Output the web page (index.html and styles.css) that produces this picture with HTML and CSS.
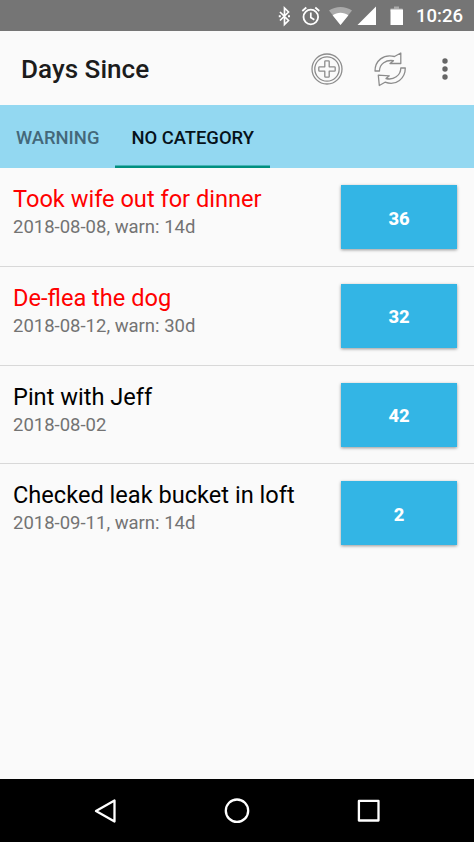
FILE: index.html
```html
<!DOCTYPE html>
<html lang="en">
<head>
    <meta charset="UTF-8">
    <meta name="viewport" content="width=device-width, initial-scale=1.0">
    <title>Days Since</title>
    <link rel="stylesheet" href="styles.css">
</head>
<body>
    <div class="screen">
        <div class="status-bar">
            <svg class="status-icons" width="130" height="31" viewBox="0 0 130 31">
                <!-- bluetooth -->
                <path d="M4 12l8.500 8.500-4 4V8l4 4L4 20.500" fill="none" stroke="#fff" stroke-width="1.700"/>
                <path d="M2.800 16.200h2M12 16.200h2" stroke="#fff" stroke-width="2"/>
                <!-- alarm -->
                <circle cx="34.800" cy="17" r="7.300" fill="none" stroke="#fff" stroke-width="1.800"/>
                <path d="M34.800 12.500V17.500l3.500 2.300M26.300 11l4-3.500M43.300 11l-4-3.500" fill="none" stroke="#fff" stroke-width="1.700"/>
                <!-- wifi -->
                <path d="M64.500 25L53 10.500C59.500 5.700 69.500 5.700 76 10.500z" fill="#aaa"/>
                <path d="M64.500 25L56.600 15.200C61 11.800 68 11.800 72.400 15.200z" fill="#fff"/>
                <!-- signal -->
                <path d="M81.500 25H100V6.500z" fill="#fff"/>
                <!-- battery -->
                <path d="M118 6.500h5v2h3.500v3H114.500v-3h3.500z" fill="#aaa"/>
                <path d="M114.500 9.500h12.500v15.500h-12.500z" fill="#fff"/>
            </svg>
            <span class="clock">10:26</span>
        </div>

        <header class="toolbar">
            <h1>Days Since</h1>
            <svg class="icon-add" width="32" height="32" viewBox="0 0 32 32">
                <circle cx="16" cy="16" r="15"/>
                <circle cx="16" cy="16" r="12.200"/>
                <path d="M14.600 7.800h2.800q.8 0 .8.800v5.200h5.200q.8 0 .8.800v2.800q0 .8-.8.800h-5.200v5.200q0 .8-.8.800h-2.800q-.8 0-.8-.8v-5.200H8.600q-.8 0-.8-.8v-2.800q0-.8.800-.8h5.200V8.600q0-.8.800-.8z"/>
            </svg>
            <svg class="icon-refresh" width="32" height="36" viewBox="0 0 32 36">
                <path d="M1 20C1 10 9.500 2.500 20.500 5.500L26.800 2V12.500H16L19.500 9.700C12 8.500 5.500 13 5.500 20z"/>
                <path d="M31.300 17C31.300 27 22.500 35.500 11 31.200L5.300 34.500 4.300 24.200 15.300 24.800 12 27.500C19.500 29.500 26.800 24.500 26.800 17z"/>
            </svg>
            <svg class="icon-more" width="8" height="24" viewBox="0 0 8 24">
                <circle cx="4" cy="4" r="2.700"/>
                <circle cx="4" cy="12" r="2.700"/>
                <circle cx="4" cy="20" r="2.700"/>
            </svg>
        </header>

        <nav class="tabs">
            <div class="tab">WARNING</div>
            <div class="tab active">NO CATEGORY</div>
        </nav>

        <ul class="list">
            <li class="item">
                <div class="info">
                    <div class="name overdue">Took wife out for dinner</div>
                    <div class="date">2018-08-08, warn: 14d</div>
                </div>
                <button class="days">36</button>
            </li>
            <li class="item">
                <div class="info">
                    <div class="name overdue">De-flea the dog</div>
                    <div class="date">2018-08-12, warn: 30d</div>
                </div>
                <button class="days">32</button>
            </li>
            <li class="item">
                <div class="info">
                    <div class="name">Pint with Jeff</div>
                    <div class="date">2018-08-02</div>
                </div>
                <button class="days">42</button>
            </li>
            <li class="item">
                <div class="info">
                    <div class="name">Checked leak bucket in loft</div>
                    <div class="date">2018-09-11, warn: 14d</div>
                </div>
                <button class="days">2</button>
            </li>
        </ul>

        <div class="nav-bar">
            <svg width="26" height="26" viewBox="0 0 26 26"><path d="M21.500 2.500V23.500L3 13z"/></svg>
            <svg width="26" height="26" viewBox="0 0 26 26"><circle cx="13" cy="12.700" r="11.200"/></svg>
            <svg width="26" height="26" viewBox="0 0 26 26"><rect x="2.900" y="2.900" width="19.600" height="19.600"/></svg>
        </div>
    </div>
</body>
</html>
```

FILE: styles.css
```css
body {
    font-family: Roboto, sans-serif;
    background-color: #fafafa;
    margin: 0;
}

.screen {
    display: flex;
    flex-direction: column;
    height: 842px;
    width: 474px;
    overflow: hidden;
}

.status-bar {
    display: flex;
    justify-content: flex-end;
    align-items: center;
    box-sizing: border-box;
    height: 31px;
    padding-right: 11px;
    background-color: #757575;
    color: #fff;
}

.status-icons {
    margin-right: 10px;
}

.clock {
    width: 47px;
    font-size: 18.500px;
    font-weight: 500;
    line-height: 31px;
    padding-top: 2px;
}

.toolbar {
    display: flex;
    align-items: center;
    box-sizing: border-box;
    height: 74px;
    padding: 1px 25px 0 21px;
}

h1 {
    flex: 1;
    margin: 0;
    padding-top: 1px;
    font-size: 26.100px;
    font-weight: 500;
    color: #1c1c1c;
}

.icon-add,
.icon-refresh {
    fill: none;
    stroke: #8c8c8c;
    stroke-width: 1.300;
    stroke-linejoin: round;
}

.icon-refresh {
    margin: 0 35px 0 31px;
}

.icon-more {
    fill: #666;
}

.tabs {
    display: flex;
    height: 63px;
    background-color: #93d8f1;
}

.tab {
    box-sizing: border-box;
    padding: 0 16px;
    font-size: 18.400px;
    font-weight: 500;
    line-height: 65px;
    color: #44687a;
}

.tab.active {
    color: #06121a;
    box-shadow: inset 0 -2.500px 0 #009080;
}

.list {
    flex: 1;
    margin: 0;
    padding: 0;
    list-style: none;
}

.item {
    display: flex;
    justify-content: space-between;
    align-items: flex-start;
    box-sizing: border-box;
    height: 98.800px;
    padding: 17px 17px 0 13px;
    border-bottom: 1px solid #d8d8d8;
}

.item:last-child {
    border-bottom: none;
}

.name {
    font-size: 23.600px;
    line-height: 28px;
    color: #000;
}

.overdue {
    color: #f00;
}

.date {
    font-size: 18.500px;
    line-height: 28px;
    color: #737373;
}

.days {
    width: 116px;
    height: 64px;
    padding: 2px 0 0;
    border: none;
    background-color: #33b5e5;
    box-shadow: 0 1px 3px rgba(0, 0, 0, 0.4);
    color: #fff;
    font-family: inherit;
    font-size: 18.400px;
    font-weight: 800;
}

.nav-bar {
    display: flex;
    justify-content: center;
    align-items: center;
    gap: 105.500px;
    height: 63px;
    background-color: #000;
}

.nav-bar svg {
    fill: none;
    stroke: #fff;
    stroke-width: 2.300;
    stroke-linejoin: round;
}
```
